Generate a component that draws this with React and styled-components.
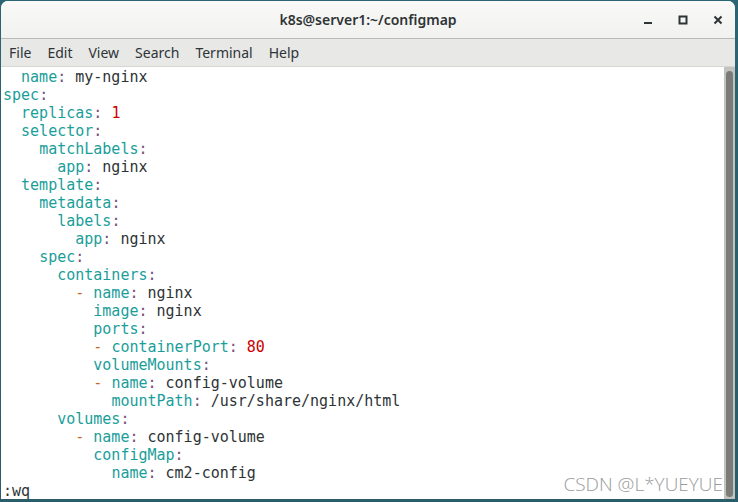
import styled, { createGlobalStyle } from 'styled-components'

const Global = createGlobalStyle`
  html, body { margin: 0; padding: 0; }
  body { width: 738px; height: 502px; overflow: hidden; background: #2a6170; }
`;

const Desktop = styled.div`
  width: 738px;
  height: 502px;
  box-sizing: border-box;
  padding: 1px 3px 3px 1px;
  background: linear-gradient(180deg, #2b6472, #2a5c6b);
  display: flex;
`;

const Window = styled.div`
  flex: 1;
  display: flex;
  flex-direction: column;
  border-radius: 7px 7px 0 0;
  overflow: hidden;
  background: #ffffff;
`;

const TitleBar = styled.div`
  height: 37px;
  flex: none;
  background: linear-gradient(180deg, #f9f9f8, #f1f1ef);
  border-bottom: 1px solid #b9b9b6;
  display: flex;
  align-items: center;
  justify-content: center;
  position: relative;
  font-family: "Noto Sans", "DejaVu Sans", sans-serif;
  font-size: 14px;
  font-weight: 600;
  color: #2e3436;
`;

const Controls = styled.div`
  position: absolute;
  right: 0;
  top: 0;
  height: 37px;
  display: flex;
  align-items: center;
`;

const Ctrl = styled.div`
  width: 35px;
  height: 37px;
  display: flex;
  align-items: center;
  justify-content: center;
`;

const MenuBar = styled.div`
  height: 27px;
  flex: none;
  background: #e8e8e7;
  border-bottom: 1px solid #d6d6d4;
  display: flex;
  align-items: center;
  padding-left: 8px;
  font-family: "Noto Sans", "DejaVu Sans", sans-serif;
  font-size: 14px;
  color: #2e3436;
`;

const MenuItem = styled.span`
  margin-right: ${p => p.gap}px;
`;

const Body = styled.div`
  flex: 1;
  display: flex;
  position: relative;
  min-height: 0;
`;

const Screen = styled.pre`
  flex: 1;
  margin: 0;
  padding: 1px 0 0 2px;
  font-family: "DejaVu Sans Mono", monospace;
  font-size: 15px;
  line-height: 18px;
  color: #2e3436;
  background: #ffffff;
  overflow: hidden;
`;

const Key = styled.span`color: #1a9e9a;`;
const Colon = styled.span`color: #75507b;`;
const Num = styled.span`color: #cc0000;`;
const Dash = styled.span`color: #c46a1a;`;

const Trough = styled.div`
  width: 11px;
  flex: none;
  background: #c2c2bf;
  padding: 4px 2px 2px 2px;
  box-sizing: border-box;
  display: flex;
`;

const Thumb = styled.div`
  flex: 1;
  background: #7a7c7a;
  border-radius: 4px;
`;

const Watermark = styled.div`
  position: absolute;
  right: 12px;
  bottom: 2px;
  font-family: "Open Sans", "Noto Sans", sans-serif;
  font-size: 19px;
  font-weight: 300;
  color: #9a9a9a;
`;

const lines = [
  [2, 'name', 'my-nginx'],
  [0, 'spec'],
  [2, 'replicas', 1],
  [2, 'selector'],
  [4, 'matchLabels'],
  [6, 'app', 'nginx'],
  [2, 'template'],
  [4, 'metadata'],
  [6, 'labels'],
  [8, 'app', 'nginx'],
  [4, 'spec'],
  [6, 'containers'],
  [8, 'name', 'nginx', true],
  [10, 'image', 'nginx'],
  [10, 'ports'],
  [10, 'containerPort', 80, true],
  [10, 'volumeMounts'],
  [10, 'name', 'config-volume', true],
  [12, 'mountPath', '/usr/share/nginx/html'],
  [6, 'volumes'],
  [8, 'name', 'config-volume', true],
  [10, 'configMap'],
  [12, 'name', 'cm2-config'],
]

const Line = ({ indent, k, v, dash }) => {
  const pad = ' '.repeat(indent)
  return (
    <>
      {pad}
      {dash && <><Dash>-</Dash>{' '}</>}
      <Key>{k}</Key>
      <Colon>:</Colon>
      {v !== undefined && ' '}
      {typeof v === 'number' ? <Num>{v}</Num> : v}
      {'\n'}
    </>
  )
}

export default function App() {
  return (
    <Desktop>
      <Global />
      <Window>
        <TitleBar>
          k8s@server1:~/configmap
          <Controls>
            <Ctrl>
              <svg width="10" height="10" viewBox="0 0 10 10">
                <rect x="1" y="7" width="8" height="2" fill="#2e3436" />
              </svg>
            </Ctrl>
            <Ctrl>
              <svg width="10" height="10" viewBox="0 0 10 10">
                <rect x="1.5" y="1.5" width="7" height="7" fill="none" stroke="#2e3436" strokeWidth="2" />
              </svg>
            </Ctrl>
            <Ctrl>
              <svg width="10" height="10" viewBox="0 0 10 10">
                <path d="M1.5 1.5 L8.5 8.5 M8.5 1.5 L1.5 8.5" stroke="#2e3436" strokeWidth="2" />
              </svg>
            </Ctrl>
          </Controls>
        </TitleBar>
        <MenuBar>
          <MenuItem gap={16}>File</MenuItem>
          <MenuItem gap={16}>Edit</MenuItem>
          <MenuItem gap={16}>View</MenuItem>
          <MenuItem gap={16}>Search</MenuItem>
          <MenuItem gap={16}>Terminal</MenuItem>
          <MenuItem gap={16}>Help</MenuItem>
        </MenuBar>
        <Body>
          <Screen>
            {lines.map(([i, k, v, d], n) => (
              <Line key={n} indent={i} k={k} v={v} dash={d} />
            ))}
            :wq
          </Screen>
          <Trough>
            <Thumb />
          </Trough>
          <Watermark>CSDN @L*YUEYUE</Watermark>
        </Body>
      </Window>
    </Desktop>
  )
}
